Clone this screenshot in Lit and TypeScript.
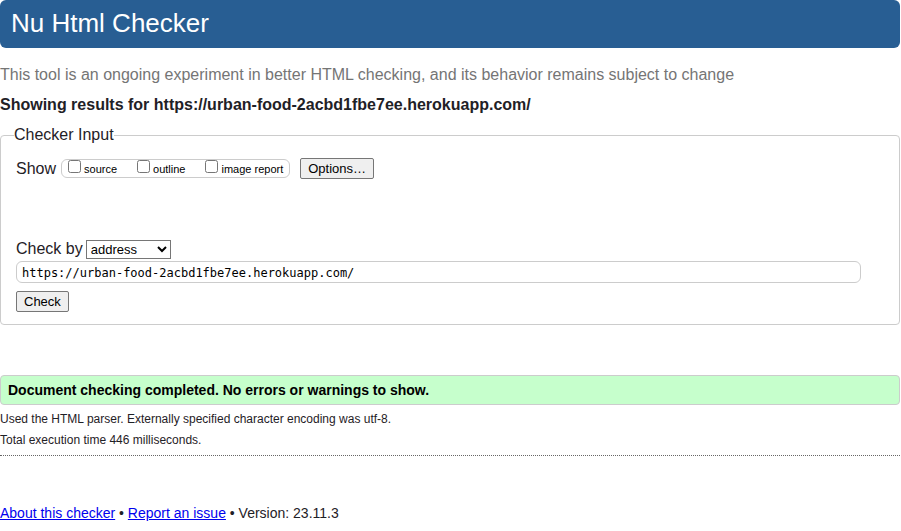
import { LitElement, html, css } from "lit";
import { customElement } from "lit/decorators.js";

@customElement("app-root")
export class AppRoot extends LitElement {
  static styles = css`
    :host {
      display: block;
      margin-right: 1px;
      color: #1f2126;
      background: #fff;
      font: 16px/20px "Liberation Sans", Arial, sans-serif;
    }
    h1,
    h2,
    p,
    fieldset {
      margin: 0;
    }
    .banner {
      padding: 7px 11px 9px;
      border-radius: 6px;
      background: #285e93;
      color: #fff;
      font-size: 26px;
      line-height: 32px;
      font-weight: 400;
    }
    .note {
      margin-top: 17px;
      color: #757575;
    }
    .subject {
      margin-top: 10px;
      font-size: 16px;
      font-weight: 700;
    }
    .panel {
      margin-top: 10px;
      padding: 13px 15px 12px;
      border: 1px solid #ccc;
      border-radius: 4px;
      min-width: 0;
    }
    .panel-title {
      margin-left: -2px;
      padding: 0;
    }
    .row {
      display: flex;
      align-items: center;
      gap: 5px;
    }
    .toggles {
      display: flex;
      align-items: flex-start;
      gap: 20px;
      box-sizing: border-box;
      height: 19px;
      margin-right: 5px;
      padding: 0 6px;
      border: 1px solid #ccc;
      border-radius: 6px;
    }
    .toggle {
      display: flex;
      align-items: flex-start;
      gap: 3px;
      color: #000;
      font-size: 11px;
      line-height: 19px;
    }
    .toggle input {
      width: 13px;
      height: 13px;
      margin: 0;
    }
    .method-row {
      gap: 3px;
      margin-top: 60px;
    }
    button,
    select {
      box-sizing: border-box;
      height: 21px;
      font: 13px/15px "Liberation Sans", Arial, sans-serif;
      color: #000;
    }
    button {
      padding: 0 7px;
      border: 1px solid #767676;
      border-radius: 2px;
      background: #efefef;
    }
    select {
      width: 85px;
      height: 19px;
      margin: 0;
      border: 1px solid #767676;
      border-radius: 0;
      background: #fff;
    }
    .address {
      display: block;
      box-sizing: border-box;
      width: calc(100% - 23px);
      height: 22px;
      margin: 2px 0 8px;
      padding: 1px 5px 0;
      border: 1px solid #ccc;
      border-radius: 6px;
      color: #000;
      font: 12px/20px "DejaVu Sans Mono", monospace;
    }
    .success {
      margin-top: 50px;
      padding: 4px 7px;
      border: 1px solid #ccc;
      border-radius: 4px;
      background: #c6ffcc;
      color: #000;
      font-size: 14px;
      font-weight: 700;
    }
    .details {
      padding: 4px 0;
      border-bottom: 1px dotted #666;
      font-size: 12px;
      line-height: 21px;
    }
    .footer {
      margin-top: 47px;
      font-size: 14px;
    }
    a {
      color: #00e;
    }
  `;

  private views = ["source", "outline", "image report"];

  render() {
    return html`
      <h1 class="banner">Nu Html Checker</h1>
      <p class="note">
        This tool is an ongoing experiment in better HTML checking, and its
        behavior remains subject to change
      </p>
      <h2 class="subject">
        Showing results for https://urban-food-2acbd1fbe7ee.herokuapp.com/
      </h2>
      <form @submit=${(e: Event) => e.preventDefault()}>
        <fieldset class="panel">
          <legend class="panel-title">Checker Input</legend>
          <div class="row">
            <span>Show</span>
            <div class="toggles">
              ${this.views.map(
                (v) => html`<label class="toggle"
                  ><input type="checkbox" name="show" value=${v} /><span
                    >${v}</span
                  ></label
                >`
              )}
            </div>
            <button type="button">Options…</button>
          </div>
          <div class="row method-row">
            <label for="method">Check by</label>
            <select id="method">
              <option>address</option>
              <option>file upload</option>
              <option>text input</option>
            </select>
          </div>
          <input
            class="address"
            type="url"
            aria-label="Address"
            value="https://urban-food-2acbd1fbe7ee.herokuapp.com/"
          />
          <button type="submit">Check</button>
        </fieldset>
      </form>
      <p class="success">
        Document checking completed. No errors or warnings to show.
      </p>
      <div class="details">
        <p>Used the HTML parser. Externally specified character encoding was utf-8.</p>
        <p>Total execution time 446 milliseconds.</p>
      </div>
      <p class="footer">
        <a href="#about">About this checker</a> •
        <a href="#issue">Report an issue</a> • Version: 23.11.3
      </p>
    `;
  }
}
